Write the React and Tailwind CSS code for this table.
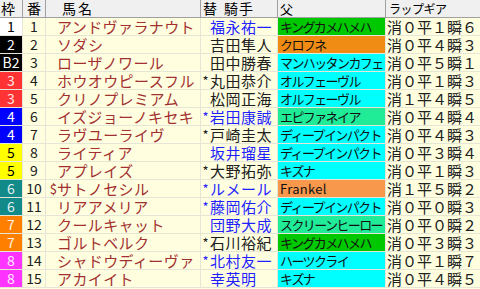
const FRAME = {
  1: 'bg-white text-black',
  2: 'bg-black text-white',
  B2: 'bg-black text-white',
  3: 'bg-[#ff3333] text-[#ffe8e8]',
  4: 'bg-[#0000ff] text-white',
  5: 'bg-[#ffff00] text-black',
  6: 'bg-[#138a8a] text-[#e0f0f0]',
  7: 'bg-[#ff8000] text-[#fff0e0]',
  8: 'bg-[#ff33ff] text-[#ffe8ff]',
}

const SIRE = {
  green: 'bg-[#00c800]',
  orange: 'bg-[#f08c14]',
  cyan: 'bg-[#00ffff]',
  spring: 'bg-[#20ec98]',
  salmon: 'bg-[#f8984c]',
}

const rows = [
  { w: '1', no: 1, name: 'アンドヴァラナウト', jockey: '福永祐一', blue: true, sire: 'キングカメハメハ', c: 'green', gear: '消０平１瞬６' },
  { w: '2', no: 2, name: 'ソダシ', jockey: '吉田隼人', sire: 'クロフネ', c: 'orange', gear: '消０平４瞬３' },
  { w: 'B2', no: 3, name: 'ローザノワール', jockey: '田中勝春', sire: 'マンハッタンカフェ', c: 'cyan', gear: '消０平５瞬１' },
  { w: '3', no: 4, name: 'ホウオウピースフル', jockey: '丸田恭介', star: true, sire: 'オルフェーヴル', c: 'cyan', gear: '消０平１瞬３' },
  { w: '3', no: 5, name: 'クリノプレミアム', jockey: '松岡正海', sire: 'オルフェーヴル', c: 'cyan', gear: '消１平４瞬５' },
  { w: '4', no: 6, name: 'イズジョーノキセキ', jockey: '岩田康誠', star: true, blue: true, sire: 'エピファネイア', c: 'spring', gear: '消０平４瞬４' },
  { w: '4', no: 7, name: 'ラヴユーライヴ', jockey: '戸崎圭太', star: true, sire: 'ディープインパクト', c: 'cyan', gear: '消０平４瞬３' },
  { w: '5', no: 8, name: 'ライティア', jockey: '坂井瑠星', blue: true, sire: 'ディープインパクト', c: 'cyan', gear: '消０平３瞬４' },
  { w: '5', no: 9, name: 'アプレイズ', jockey: '大野拓弥', star: true, sire: 'キズナ', c: 'cyan', gear: '消０平１瞬３' },
  { w: '6', no: 10, name: 'サトノセシル', mark: '$', jockey: 'ルメール', star: true, blue: true, sire: 'Frankel', c: 'salmon', gear: '消１平５瞬２' },
  { w: '6', no: 11, name: 'リアアメリア', jockey: '藤岡佑介', star: true, blue: true, sire: 'ディープインパクト', c: 'cyan', gear: '消０平０瞬３' },
  { w: '7', no: 12, name: 'クールキャット', jockey: '団野大成', blue: true, sire: 'スクリーンヒーロー', c: 'spring', gear: '消０平０瞬２' },
  { w: '7', no: 13, name: 'ゴルトベルク', jockey: '石川裕紀', star: true, sire: 'キングカメハメハ', c: 'green', gear: '消０平３瞬３' },
  { w: '8', no: 14, name: 'シャドウディーヴァ', jockey: '北村友一', star: true, blue: true, sire: 'ハーツクライ', c: 'cyan', gear: '消０平１瞬７' },
  { w: '8', no: 15, name: 'アカイイト', jockey: '幸英明', blue: true, sire: 'キズナ', c: 'cyan', gear: '消０平４瞬５' },
]

const font = "font-['Noto_Sans_CJK_JP',sans-serif]"

function HeaderRow() {
  return (
    <div className="flex h-[18px] bg-[#f0f0f0] border-b border-[#a0a0a0] text-black text-[14px] leading-[17px]">
      <div className="w-[23px] shrink-0 border-r border-[#a0a0a0] pl-px">枠</div>
      <div className="w-[23px] shrink-0 border-r border-[#a0a0a0] text-center">番</div>
      <div className="w-[155px] shrink-0 border-r border-[#a0a0a0] pl-[16px] tracking-[2px]">馬名</div>
      <div className="w-[77px] shrink-0 border-r border-[#a0a0a0] flex pl-[2px]">
        <span>替</span>
        <span className="ml-[7px] tracking-[1px]">騎手</span>
      </div>
      <div className="w-[108px] shrink-0 border-r border-[#a0a0a0] pl-[2px] text-[13px]">父</div>
      <div className="flex-1 pl-[3px] text-[12px] tracking-[-0.5px]">ラップギア</div>
    </div>
  )
}

function Row({ r }) {
  return (
    <div className="flex h-[18px] border-b border-[#e6e6d8] bg-[#ffffe0] leading-[17px]">
      <div className={`w-[23px] shrink-0 border-r border-[#e6e6d8] text-center text-[14px] ${FRAME[r.w]}`}>
        {r.w}
      </div>
      <div className="w-[23px] shrink-0 border-r border-[#e6e6d8] text-center text-[14px] text-[#202020]">{r.no}</div>
      <div className="w-[155px] shrink-0 border-r border-[#e6e6d8] flex text-[15px] text-[#a33030] whitespace-nowrap overflow-hidden">
        <span className="w-[11px] shrink-0 text-right text-[13px]">{r.mark}</span>
        <span className="tracking-[0.4px]">{r.name}</span>
      </div>
      <div className={`w-[77px] shrink-0 border-r border-[#e6e6d8] flex text-[15px] whitespace-nowrap ${r.blue ? 'text-[#1f1fff]' : 'text-[#202020]'}`}>
        <span className="w-[9px] shrink-0 text-center text-[13px]">{r.star ? '*' : ''}</span>
        <span className="tracking-[0.5px]">{r.jockey}</span>
      </div>
      <div className={`w-[108px] shrink-0 border-r border-[#e6e6d8] pl-[2px] text-[13px] tracking-[-1.6px] text-[#101010] whitespace-nowrap overflow-hidden ${SIRE[r.c]}`}>
        {r.sire === 'Frankel' ? <span className="tracking-[0.3px]">Frankel</span> : r.sire}
      </div>
      <div className="flex-1 pl-[1px] text-[15px] text-[#202020] whitespace-nowrap">{r.gear}</div>
    </div>
  )
}

export default function App() {
  return (
    <div className={`w-[480px] h-[289px] overflow-hidden bg-[#ffffe0] ${font}`}>
      <HeaderRow />
      {rows.map((r) => (
        <Row key={r.no} r={r} />
      ))}
    </div>
  )
}
